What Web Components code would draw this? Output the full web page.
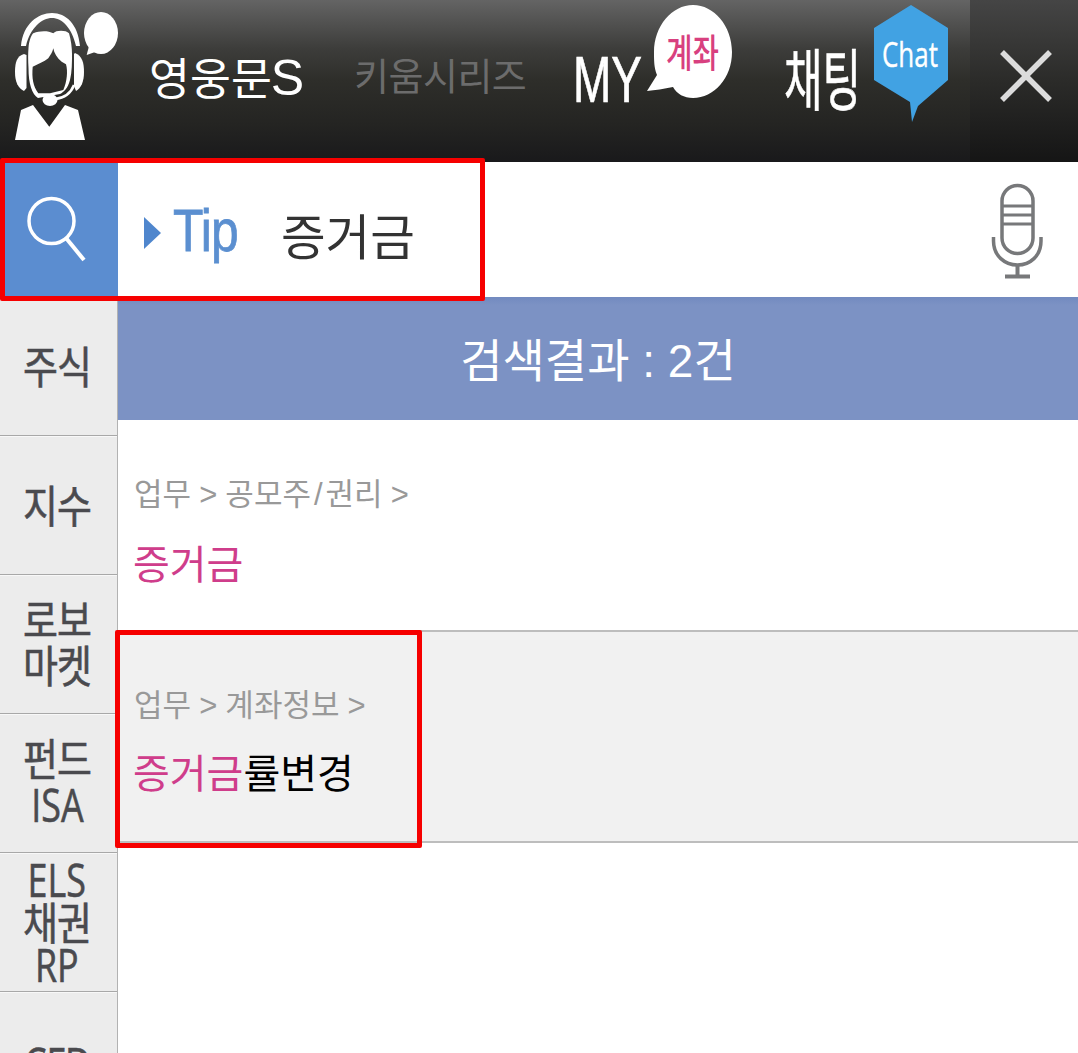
<!DOCTYPE html>
<html lang="ko">
<head>
<meta charset="utf-8">
<title>검색</title>
<style>
  html, body { margin: 0; padding: 0; background: #fff; overflow: hidden; }
  body { font-family: "Noto Sans CJK KR", "Noto Sans", sans-serif; }
</style>
</head>
<body>
<kw-page>
  <kw-header></kw-header>
  <kw-search term="증거금"></kw-search>
  <kw-body>
    <kw-side-item one>주식</kw-side-item>
    <kw-side-item one>지수</kw-side-item>
    <kw-side-item>로보<br>마켓</kw-side-item>
    <kw-side-item>펀드<br><span class="lat">ISA</span></kw-side-item>
    <kw-side-item dense><span class="lat">ELS</span><br>채권<br><span class="lat">RP</span></kw-side-item>
    <kw-side-item low><span class="lat">CFD</span></kw-side-item>
    <kw-result-head slot="main">검색결과 : 2건</kw-result-head>
    <kw-result-row slot="main" crumb="업무 &gt; 공모주/권리 &gt;"><em>증거금</em></kw-result-row>
    <kw-result-row slot="main" crumb="업무 &gt; 계좌정보 &gt;" alt marked><em>증거금</em>률변경</kw-result-row>
  </kw-body>
</kw-page>

<script>
const KR = '"Liberation Sans", "Noto Sans CJK KR", sans-serif';
const HUMAN = '"Open Sans", "Noto Sans", sans-serif';

class KwPage extends HTMLElement {
  constructor() {
    super();
    this.attachShadow({ mode: 'open' }).innerHTML = `
      <style>
        :host { display: block; width: 1078px; height: 1053px; overflow: hidden; position: relative; }
      </style>
      <slot></slot>`;
  }
}

class KwHeader extends HTMLElement {
  constructor() {
    super();
    this.attachShadow({ mode: 'open' }).innerHTML = `
      <style>
        :host {
          display: flex; height: 162px; color: #fff; align-items: flex-start;
          font-family: ${KR};
          background: linear-gradient(#646464 0, #3d3d3b 48px, #2e2e2a 80px, #242422 125px, #19191b 162px);
        }
        svg { display: block; flex: none; }
        .name { margin: 48px 0 0 31px; width: 205px; font-size: 44.500px; line-height: 60px; white-space: nowrap; }
        .name span { font-size: 50px; margin-left: -1px; }
        .team { margin-top: 47px; width: 220px; font-size: 38px; line-height: 60px; color: #6c6c6c; letter-spacing: -.5px; white-space: nowrap; }
        .my { width: 210px; }
        .chat { width: 186px; }
        .close {
          margin-left: auto; width: 108px; height: 162px;
          background: linear-gradient(#454545, #2b2b29 50%, #151515);
        }
      </style>
      <svg width="118" height="162" viewBox="0 0 118 162">
        <g fill="#fff">
          <ellipse cx="101" cy="33" rx="17" ry="21"/>
          <path d="M89 46 L86.700 55 L98 51Z"/>
          <path d="M15 140 L21 110 L33 105 L49.300 126.700 L65 105 L78 110 L85 140Z"/>
          <path d="M21 46 C23 24 38 13 52 13 C66 13 78 24 80 46 L76 46 C72 28 62 18 52 18 C42 18 30 28 26 46Z"/>
          <path d="M24 54 C17 56 15 62 15 72 C15 82 18 88 24 91 L26.500 88 L26.500 55Z"/>
          <path d="M75 53 C82 56 84 62 84 72 C84 82 81 88 76 91 L74 86 L74 54Z"/>
          <path fill-rule="evenodd" d="M28.500 68 C28 60 28 54 28.500 48 C29 40 32 33 34 33 C38 31 48 30 53.300 33.300 C56 30 66 30 69 33.300 C71 40 72 48 72 54 C72 62 72 72 70 80 C68 88 64 92 60 94 L38 98 C32 94 28.500 84 28.500 68Z
            M32.700 66.700 C38 64 44 62 48.300 58.300 C50.500 55 52.500 52 53.300 48.300 C54 53 57 58 61.700 61.700 L66 64.300 C68 71 67 82 63.300 90 L50 93.300 L38.300 93.300 C33 86 31.700 78 32.700 66.700Z"/>
          <ellipse cx="50" cy="100" rx="7.500" ry="6"/>
        </g>
        <path d="M55 99 C64 98 71 93 74 85" fill="none" stroke="#fff" stroke-width="2.500"/>
      </svg>
      <div class="name">영웅문<span>S</span></div>
      <div class="team">키움시리즈</div>
      <svg class="my" width="210" height="162" viewBox="574 0 210 162">
        <path fill="#fff" d="M657 75 C654 68 654 60 654 52 C654 26 672 5 693 5 C714 5 732 26 732 52 C732 78 714 98 693 98 C684 98 677 94 673 87 C664 89 655 90 647 91Z"/>
        <text x="573" y="102" fill="#fff" stroke="#fff" stroke-width=".7" font-family='"Liberation Sans", sans-serif' font-size="64" textLength="69" lengthAdjust="spacingAndGlyphs">MY</text>
        <text x="666" y="64" fill="#d8407f" font-family='"Noto Sans CJK KR", sans-serif' font-weight="500" font-size="29" textLength="53" lengthAdjust="spacingAndGlyphs" transform="translate(0 -19.400) scale(1 1.350)">계좌</text>
      </svg>
      <svg class="chat" width="186" height="162" viewBox="784 0 186 162">
        <path fill="#41a2e3" d="M911 5 L948 28 L948 80 L918 106 L912 122 L910 102 L874 80 L874 28Z"/>
        <text x="784" y="98" fill="#fff" stroke="#fff" stroke-width=".4" font-family='"Noto Sans CJK KR", sans-serif' font-size="42" textLength="77" lengthAdjust="spacingAndGlyphs" transform="translate(0 -52) scale(1 1.600)">채팅</text>
        <text x="882" y="67" fill="#fff" stroke="#fff" stroke-width=".4" font-family='"Open Sans", sans-serif' font-size="35" textLength="56" lengthAdjust="spacingAndGlyphs">Chat</text>
      </svg>
      <div class="close">
        <svg width="108" height="162" viewBox="970 0 108 162">
          <path d="M1002 52 L1050 100 M1050 52 L1002 100" stroke="#dcdcdc" stroke-width="5.500" fill="none"/>
        </svg>
      </div>`;
  }
}

class KwCallout extends HTMLElement {
  constructor() {
    super();
    this.attachShadow({ mode: 'open' }).innerHTML = `
      <style>
        :host { display: block; position: absolute; box-sizing: border-box; border: 5px solid #f60000; border-radius: 2px; pointer-events: none; z-index: 2; }
      </style>`;
  }
}

class KwSearch extends HTMLElement {
  constructor() {
    super();
    this.attachShadow({ mode: 'open' }).innerHTML = `
      <style>
        :host { display: flex; height: 135px; background: #fff; position: relative; align-items: stretch; font-family: ${KR}; }
        .btn { width: 118px; flex: none; background: #5b8dd0; }
        .btn svg, .mic svg { display: block; }
        .tip { display: flex; align-items: flex-start; margin-left: 26px; width: 137px; color: #5b8fd0; }
        .tip svg { margin-top: 55px; flex: none; }
        .tip b {
          margin: 29px 0 0 12px; font: 400 60px/80px "Liberation Sans", sans-serif; letter-spacing: -1px;
          display: inline-block; transform: scaleX(.83); transform-origin: left; -webkit-text-stroke: .8px #5b8fd0;
        }
        .term { font-size: 48.500px; line-height: 70px; margin-top: 41px; color: #333; white-space: nowrap; }
        .mic { margin-left: auto; width: 96px; flex: none; }
        kw-callout { left: 0; top: -4px; width: 485px; height: 143px; }
      </style>
      <div class="btn">
        <svg width="118" height="135" viewBox="0 162 118 135">
          <circle cx="51.500" cy="221" r="22.500" fill="none" stroke="#fff" stroke-width="3.500"/>
          <path d="M66 238 L84 260" stroke="#fff" stroke-width="4" fill="none"/>
        </svg>
      </div>
      <div class="tip">
        <svg width="17" height="32" viewBox="0 0 17 32"><path d="M0 0 L17 16 L0 32Z" fill="#4f86cd"/></svg>
        <b>Tip</b>
      </div>
      <div class="term">${this.getAttribute('term') || ''}</div>
      <div class="mic">
        <svg width="96" height="135" viewBox="982 162 96 135">
          <rect x="1002" y="185.500" width="31" height="68" rx="15.500" fill="none" stroke="#77787a" stroke-width="3.500"/>
          <path d="M1003 206 H1032 M1003 215 H1032 M1003 224 H1032" stroke="#77787a" stroke-width="3" fill="none"/>
          <path d="M993.500 237 V241 C993.500 256 1005 265 1017.500 265 C1030 265 1041 256 1041 241 V237" stroke="#77787a" stroke-width="3.500" fill="none"/>
          <path d="M1017.500 265 V276" stroke="#77787a" stroke-width="4" fill="none"/>
          <path d="M1005 276.500 H1030" stroke="#77787a" stroke-width="4" fill="none"/>
        </svg>
      </div>
      <kw-callout></kw-callout>`;
  }
}

class KwBody extends HTMLElement {
  constructor() {
    super();
    this.attachShadow({ mode: 'open' }).innerHTML = `
      <style>
        :host { display: flex; height: 756px; align-items: stretch; }
        .side { width: 117px; flex: none; background: #ececec; border-right: 1px solid #b2b2b2; overflow: hidden; }
        .main { flex: 1; min-width: 0; }
      </style>
      <div class="side"><slot></slot></div>
      <div class="main"><slot name="main"></slot></div>`;
  }
}

class KwSideItem extends HTMLElement {
  constructor() {
    super();
    this.attachShadow({ mode: 'open' }).innerHTML = `
      <style>
        :host {
          display: flex; box-sizing: border-box; height: 139px; align-items: center; justify-content: center;
          background: #ececec; border-bottom: 1px solid #a8a8a8; box-shadow: inset 0 1px 0 #f8f8f8;
          color: #4a4a4e; font-family: "Noto Sans CJK KR", sans-serif;
          text-align: center;
        }
        div {
          font-size: 38px; line-height: 40px; letter-spacing: -1px; margin-left: -3px;
          -webkit-text-stroke: .5px #4a4a4e;
          transform: translateY(-2.500px) scaleY(1.16); white-space: nowrap;
        }
        :host([one]) div { transform: translateY(-.500px) scaleY(1.16); }
        :host([dense]) div { line-height: 36px; margin-top: -1px; transform: translateY(-.500px) scaleY(1.16); }
        :host([low]) div { margin-top: 8px; }
        ::slotted(.lat) { display: inline-block; font-family: ${HUMAN}; font-size: 39px; letter-spacing: 0; transform: scaleX(.92); }
      </style>
      <div><slot></slot></div>`;
  }
}

class KwResultHead extends HTMLElement {
  constructor() {
    super();
    this.attachShadow({ mode: 'open' }).innerHTML = `
      <style>
        :host {
          display: flex; box-sizing: border-box; height: 123px; padding-bottom: 4px; align-items: center; justify-content: center;
          background: linear-gradient(#728ac0, #7c92c4 8px); color: #fff;
          font-family: ${KR}; font-size: 46px;
        }
      </style>
      <slot></slot>`;
  }
}

class KwResultRow extends HTMLElement {
  constructor() {
    super();
    const crumb = (this.getAttribute('crumb') || '').replace(/>/g, '&gt;').replace(/\//g, '<i>/</i>');
    this.attachShadow({ mode: 'open' }).innerHTML = `
      <style>
        :host {
          display: block; box-sizing: border-box; height: 212px; padding: 53px 0 0 16px; position: relative;
          background: #fff; border-bottom: 2px solid #bdbdbd; font-family: ${KR}; color: #000;
        }
        :host([alt]) { height: 211px; background: #f1f1f1; padding-top: 52px; }
        :host([alt]) .title { margin-top: 18px; }
        .crumb { font-size: 31px; line-height: 44px; color: #999; word-spacing: -.5px; white-space: nowrap; }
        .crumb i { font-style: normal; margin: 0 3px; }
        .title { font-size: 40px; line-height: 56px; margin-top: 20px; margin-left: -1px; white-space: nowrap; }
        ::slotted(em) { font-style: normal; color: #cf3d8b; }
        kw-callout { left: -3px; top: -2px; width: 307px; height: 218px; }
      </style>
      <div class="crumb">${crumb}</div>
      <div class="title"><slot></slot></div>
      ${this.hasAttribute('marked') ? '<kw-callout></kw-callout>' : ''}`;
  }
}

customElements.define('kw-page', KwPage);
customElements.define('kw-header', KwHeader);
customElements.define('kw-callout', KwCallout);
customElements.define('kw-search', KwSearch);
customElements.define('kw-body', KwBody);
customElements.define('kw-side-item', KwSideItem);
customElements.define('kw-result-head', KwResultHead);
customElements.define('kw-result-row', KwResultRow);
</script>
</body>
</html>
